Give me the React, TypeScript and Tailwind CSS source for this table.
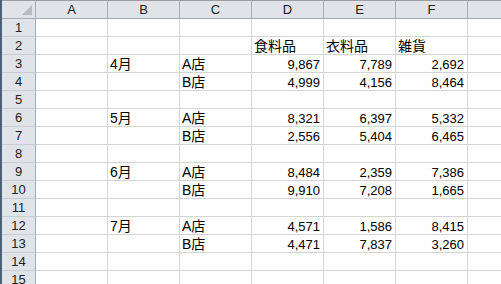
import React from "react";

type Cell = { t: string; num?: boolean };
const data: Record<number, Record<string, string>> = {
  2: { D: "食料品", E: "衣料品", F: "雑貨" },
  3: { B: "4月", C: "A店", D: "9,867", E: "7,789", F: "2,692" },
  4: { C: "B店", D: "4,999", E: "4,156", F: "8,464" },
  6: { B: "5月", C: "A店", D: "8,321", E: "6,397", F: "5,332" },
  7: { C: "B店", D: "2,556", E: "5,404", F: "6,465" },
  9: { B: "6月", C: "A店", D: "8,484", E: "2,359", F: "7,386" },
  10: { C: "B店", D: "9,910", E: "7,208", F: "1,665" },
  12: { B: "7月", C: "A店", D: "4,571", E: "1,586", F: "8,415" },
  13: { C: "B店", D: "4,471", E: "7,837", F: "3,260" },
};

const cols = ["A", "B", "C", "D", "E", "F"];
const font = { fontFamily: '"Liberation Sans", "Noto Sans CJK JP", sans-serif' };

export default function App() {
  const rows = Array.from({ length: 15 }, (_, i) => i + 1);
  return (
    <div className="w-[501px] h-[284px] overflow-hidden bg-white border-l-2 border-[#4e5f78]" style={font}>
      <div className="flex border-t border-[#9a9ea4] bg-[#e0e3e7]">
        <div className="w-[34px] h-[18px] shrink-0 border-r border-b border-[#a4abb5] relative">
          <div className="absolute right-[3px] bottom-[3px] w-0 h-0 border-l-[10px] border-l-transparent border-b-[10px] border-b-[#b7bcc3]" />
        </div>
        {cols.map((c) => (
          <div
            key={c}
            className="w-[72px] h-[18px] shrink-0 border-r border-b border-[#a4abb5] flex items-center justify-center text-[13px] text-[#222] leading-none"
          >
            {c}
          </div>
        ))}
        <div className="flex-1 h-[18px] border-b border-[#a4abb5] flex items-center pl-[33px] text-[13px] text-[#222] leading-none">
          G
        </div>
      </div>
      {rows.map((r) => (
        <div key={r} className="flex">
          <div className="w-[34px] h-[18px] shrink-0 bg-[#e0e3e7] border-r border-[#a4abb5] border-b border-b-[#c9ced5] flex items-center justify-center text-[13px] text-[#222] leading-none">
            {r}
          </div>
          {cols.map((c) => {
            const v = data[r]?.[c];
            const isNum = v !== undefined && /^[0-9,]+$/.test(v);
            const isCjk = v !== undefined && /[\u3000-\u9fff]/.test(v);
            return (
              <div
                key={c}
                className={`w-[72px] h-[18px] shrink-0 border-r border-b border-[#d4d4d4] flex items-end pb-[1px] leading-none text-black whitespace-nowrap overflow-visible ${
                  isNum ? "justify-end pr-[3px] text-[13px]" : "justify-start pl-[2px] text-[14px]"
                }`}
              >
                {v ? <span className={isCjk ? "tracking-[0px]" : ""}>{v}</span> : null}
              </div>
            );
          })}
          <div className="flex-1 h-[18px] border-b border-[#d4d4d4]" />
        </div>
      ))}
    </div>
  );
}
